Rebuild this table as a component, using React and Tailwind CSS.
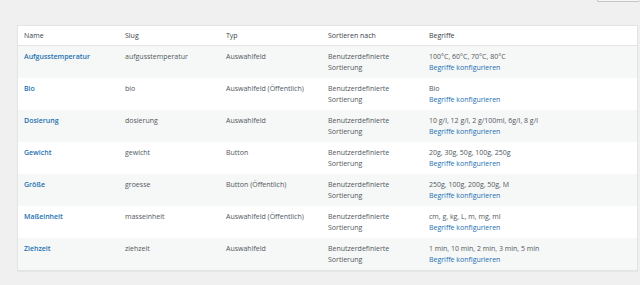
const rows = [
  { name: "Aufgusstemperatur", slug: "aufgusstemperatur", typ: "Auswahlfeld", terms: "100°C, 60°C, 70°C, 80°C" },
  { name: "Bio", slug: "bio", typ: "Auswahlfeld (Öffentlich)", terms: "Bio" },
  { name: "Dosierung", slug: "dosierung", typ: "Auswahlfeld", terms: "10 g/l, 12 g/l, 2 g/100ml, 6g/l, 8 g/l" },
  { name: "Gewicht", slug: "gewicht", typ: "Button", terms: "20g, 30g, 50g, 100g, 250g" },
  { name: "Größe", slug: "groesse", typ: "Button (Öffentlich)", terms: "250g, 100g, 200g, 50g, M" },
  { name: "Maßeinheit", slug: "masseinheit", typ: "Auswahlfeld (Öffentlich)", terms: "cm, g, kg, L, m, mg, ml" },
  { name: "Ziehzeit", slug: "ziehzeit", typ: "Auswahlfeld", terms: "1 min, 10 min, 2 min, 3 min, 5 min" }
];

const cols = "grid grid-cols-[101px_101px_102px_101px_1fr]";

export default function App() {
  return (
    <div className="h-[285px] w-[640px] overflow-hidden bg-[#f0f0f1] font-['Open_Sans',sans-serif] text-[7px]">
      <div className="flex justify-end">
        <div className="h-[2px] w-[43px] rounded-b-sm border-b border-l border-[#c3c4c7] bg-[#f6f7f7]" />
      </div>
      <div className="ml-[17px] mt-[23px] w-[621px] border border-[#e3e4e6] bg-white shadow-[0_1px_1px_rgba(0,0,0,0.04)]">
        <div className={`${cols} h-[20px] items-center border-b border-[#e3e4e6] pl-[6px] leading-[11px] text-[#3c434a]`}>
          <div>Name</div>
          <div>Slug</div>
          <div>Typ</div>
          <div>Sortieren nach</div>
          <div>Begriffe</div>
        </div>
        {rows.map((r, i) => (
          <div
            key={r.slug}
            className={`${cols} h-[32px] pl-[6px] pt-[5px] leading-[11px] text-[#50575e] ${i % 2 === 0 ? "bg-[#f6f7f7]" : "bg-white"}`}
          >
            <div className="font-semibold text-[#2271b1]">{r.name}</div>
            <div>{r.slug}</div>
            <div>{r.typ}</div>
            <div>
              <div>Benutzerdefinierte</div>
              <div>Sortierung</div>
            </div>
            <div>
              <div>{r.terms}</div>
              <div className="text-[#2271b1]">Begriffe konfigurieren</div>
            </div>
          </div>
        ))}
      </div>
    </div>
  );
}
